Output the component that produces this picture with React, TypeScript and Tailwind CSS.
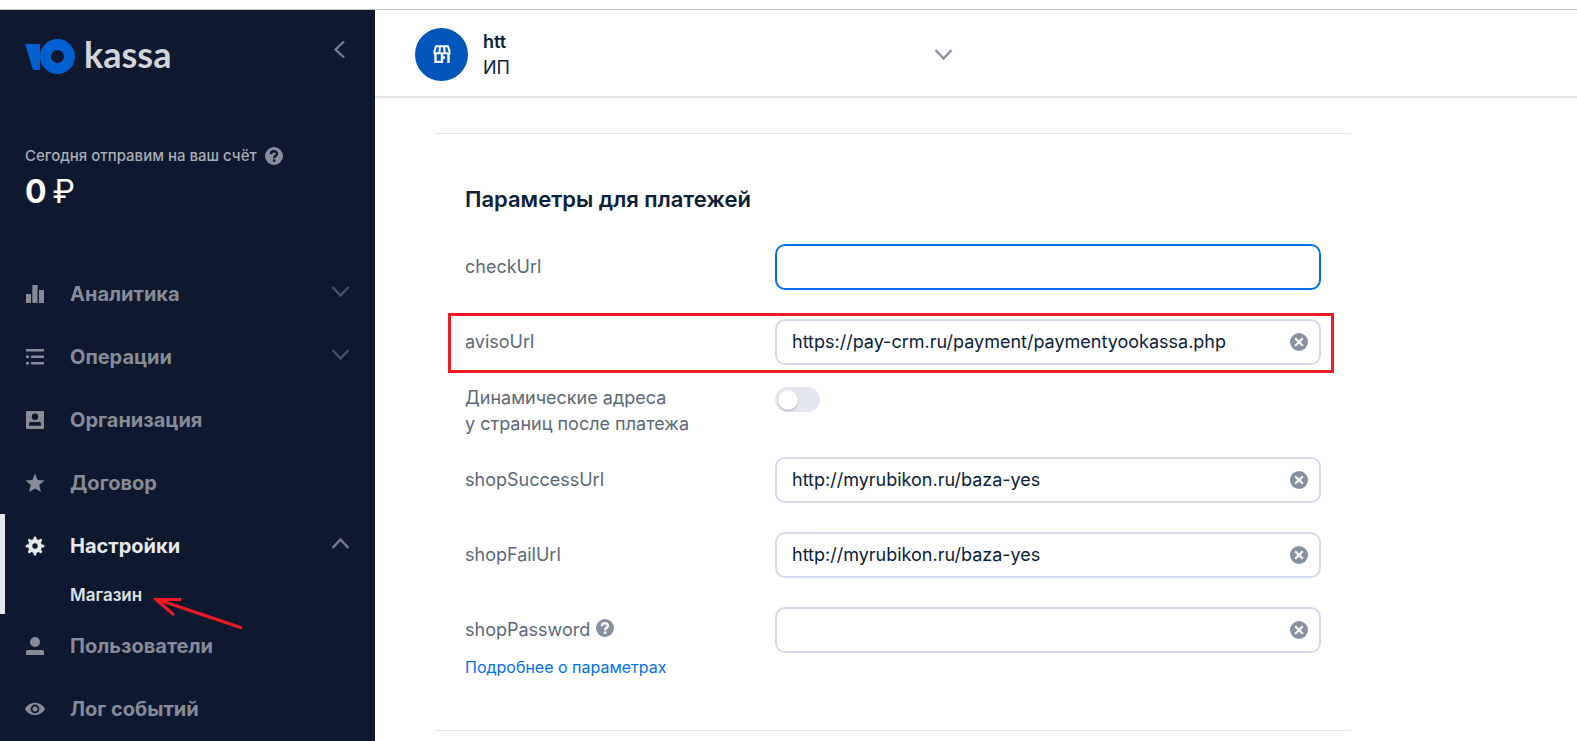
import { useState } from "react";
import type { ReactNode } from "react";
import clsx from "clsx";

interface NavItem {
  label: string;
  icon: ReactNode;
  chevron?: "up" | "down";
  active?: boolean;
  children?: string[];
}

function Chevron({ dir, className }: { dir: "up" | "down" | "left"; className?: string }) {
  const d = {
    up: "M1.5 14 L9.5 5.5 L17.5 14",
    down: "M1.5 5 L9.5 13.5 L17.5 5",
    left: "M14 1.5 L5.5 9.5 L14 17.5",
  }[dir];
  return (
    <svg viewBox="0 0 19 19" className={clsx("h-[19px] w-[19px] shrink-0", className)} fill="none" stroke="currentColor" strokeWidth="2.4">
      <path d={d} />
    </svg>
  );
}

function HelpIcon() {
  return (
    <svg viewBox="0 0 18 18" className="h-[18px] w-[18px]" fill="none">
      <circle cx="9" cy="9" r="9" fill="currentColor" />
      <path d="M5.9 7.2 C5.9 3.2 12 3.4 12 6.8 C12 8.9 9.1 8.8 9.1 11.3" className="stroke-(--hole)" strokeWidth="2.4" />
      <rect x="7.9" y="12.4" width="2.5" height="2.5" className="fill-(--hole)" />
    </svg>
  );
}

function ClearIcon() {
  return (
    <svg viewBox="0 0 18 18" className="h-[18px] w-[18px]" fill="none">
      <circle cx="9" cy="9" r="9" fill="#86919f" />
      <path d="M5.2 5.2 L12.8 12.8 M12.8 5.2 L5.2 12.8" stroke="#fff" strokeWidth="2.2" />
    </svg>
  );
}

function NavIcon({ children }: { children: ReactNode }) {
  return (
    <svg viewBox="0 0 18 18" className="h-[18px] w-[18px] shrink-0 overflow-visible" fill="currentColor">
      {children}
    </svg>
  );
}

const NAV: NavItem[] = [
  {
    label: "Аналитика",
    chevron: "down",
    icon: <path d="M0 9h5v9H0z M6.3 0h5.2v18H6.3z M13 5h5v13h-5z" />,
  },
  {
    label: "Операции",
    chevron: "down",
    icon: <path d="M0 1h18v2.4H0z M0 7.6h3v2.4H0z M5 7.6h13v2.4H5z M0 14h3v2.4H0z M5 14h13v2.4H5z" />,
  },
  {
    label: "Организация",
    icon: (
      <path
        fillRule="evenodd"
        d="M1 0h16a1 1 0 0 1 1 1v16a1 1 0 0 1-1 1H1a1 1 0 0 1-1-1V1a1 1 0 0 1 1-1z M9 2.6a3.2 3.2 0 1 0 0 6.4a3.2 3.2 0 1 0 0-6.4z M3 12.3v2.5h12v-2.5l-1-1.3H4z"
      />
    ),
  },
  {
    label: "Договор",
    icon: <path d="M9 -.5 L11.6 6 L18.6 6.5 L13.2 11.1 L15 18 L9 14.4 L3 18 L4.8 11.1 L-.6 6.5 L6.4 6z" />,
  },
  {
    label: "Настройки",
    chevron: "up",
    active: true,
    children: ["Магазин"],
    icon: (
      <>
        <circle cx="9" cy="9" r="4.8" fill="none" stroke="currentColor" strokeWidth="4.2" />
        {/* eight teeth, 45 degrees apart */}
        <path
          d="M9 3V1 M9 15v2 M3 9H1 M15 9h2 M4.8 4.8L3.4 3.4 M13.2 4.8l1.4-1.4 M4.8 13.2l-1.4 1.4 M13.2 13.2l1.4 1.4"
          fill="none"
          stroke="currentColor"
          strokeWidth="3"
          strokeLinecap="round"
        />
      </>
    ),
  },
  {
    label: "Пользователи",
    icon: (
      <>
        <circle cx="9" cy="5" r="5" />
        <path d="M0 18v-3.4Q0 13 1.8 13h14.4Q18 13 18 14.6V18z" />
      </>
    ),
  },
  {
    label: "Лог событий",
    icon: (
      <>
        <path
          fillRule="evenodd"
          d="M-1 9C1.2 5 5 2.8 9 2.8S16.8 5 19 9C16.8 13 13 15.2 9 15.2S1.2 13-1 9z M9 4.6a4.4 4.4 0 1 0 0 8.8a4.4 4.4 0 1 0 0-8.8z"
        />
        <circle cx="9" cy="9" r="2.5" />
      </>
    ),
  },
];

function Sidebar() {
  return (
    <aside className="w-[375px] shrink-0 bg-[#0e182f] text-[#878b96]">
      <div className="flex h-[86px] items-start justify-between px-[25px] pt-[29px]">
        <a href="#" className="flex items-start gap-[9px]">
          <svg viewBox="0 0 50 35" className="h-[35px] w-[50px]">
            <path d="M0 5h15v26H8z" fill="#0060cf" />
            <path
              fillRule="evenodd"
              fill="#0060cf"
              d="M32.5 0a17.5 17.5 0 1 0 0 35a17.5 17.5 0 1 0 0-35z M32.5 11a6.5 6.5 0 1 1 0 13a6.5 6.5 0 1 1 0-13z"
            />
          </svg>
          <span className="font-[Lato,sans-serif] text-[36px] leading-[30px] font-bold text-[#d3d3da]">kassa</span>
        </a>
        <button type="button" aria-label="Свернуть меню" className="pt-px pr-px">
          <Chevron dir="left" className="text-[#777c87]" />
        </button>
      </div>

      <div className="mt-12 h-[118px] px-[25px]">
        <div className="flex items-center gap-2 text-[15px] leading-6 font-medium text-[#a9adb5]">
          Сегодня отправим на ваш счёт
          <button type="button" aria-label="Подсказка" className="text-[#8b8e9a] [--hole:#0e182f]">
            <HelpIcon />
          </button>
        </div>
        <p className="mt-1 flex gap-1.5 text-[32px] leading-10 text-white">
          <b>0</b>
          <span>₽</span>
        </p>
      </div>

      <nav>
        <ul>
          {NAV.map((item) => (
            <li key={item.label} className={clsx(item.active && "border-l-[5px] border-[#e7e8eb] text-[#e7e8eb]")}>
              <a
                href="#"
                className={clsx("flex h-[63px] items-center pr-[25px] text-xl font-bold", item.active ? "pl-[21px]" : "pl-[26px]")}
              >
                <NavIcon>{item.icon}</NavIcon>
                <span className="ml-[26px] flex-1">{item.label}</span>
                {item.chevron && (
                  <Chevron dir={item.chevron} className={clsx("mb-1", item.active ? "text-[#777c87]" : "text-[#4a5262]")} />
                )}
              </a>
              {item.children?.map((child) => (
                <a key={child} href="#" className="relative flex h-[37px] items-center pl-[65px] text-[17px] font-semibold text-[#dfe0e4]">
                  {child}
                  {/* red arrow pointing at the menu entry */}
                  <svg viewBox="0 0 90 35" className="absolute top-5 left-[149px] h-[35px] w-[90px]" fill="none" stroke="#ed1c24" strokeWidth="3">
                    <path d="M2 2 L88 31 M27 2.5 H2 L20 18" />
                  </svg>
                </a>
              ))}
            </li>
          ))}
        </ul>
      </nav>
    </aside>
  );
}

interface UrlFieldProps {
  name: string;
  initial?: string;
  type?: string;
  focused?: boolean;
  marked?: boolean;
  help?: boolean;
}

function UrlField({ name, initial = "", type = "text", focused, marked, help }: UrlFieldProps) {
  const [value, setValue] = useState(initial);

  return (
    <div className="relative flex items-center">
      <div className="flex w-[310px] shrink-0 items-center gap-1.5">
        <label htmlFor={name}>{name}</label>
        {help && (
          <button type="button" aria-label="Подсказка" className="mb-1 text-[#86919f] [--hole:#fff]">
            <HelpIcon />
          </button>
        )}
      </div>
      <div className="relative flex-1">
        <input
          id={name}
          type={type}
          value={value}
          onChange={(e) => setValue(e.target.value)}
          className={clsx(
            "block h-[46px] w-full rounded-[10px] border-2 bg-white pr-12 pb-0.5 pl-[15px] text-[#0b2138] outline-none",
            focused ? "border-[#0070f0]" : "border-[#d3dae9]"
          )}
        />
        {!focused && (
          <button
            type="button"
            aria-label={`Очистить ${name}`}
            onClick={() => setValue("")}
            className="absolute inset-y-0 right-[13px]"
          >
            <ClearIcon />
          </button>
        )}
      </div>
      {marked && (
        <div className="pointer-events-none absolute -top-1.5 -right-[13px] -bottom-2 -left-[17px] border-[3px] border-[#ed1c24]" />
      )}
    </div>
  );
}

function ShopHeader() {
  return (
    <header className="border-b-2 border-[#e3e7ec] pl-10">
      <button type="button" className="flex h-[86px] w-full max-w-[538px] items-center gap-[15px] pt-0.5 text-left">
        <span className="flex h-[53px] w-[53px] items-center justify-center rounded-full bg-[#0055bb]">
          <svg viewBox="0 0 18 18" className="h-[18px] w-[18px]" fill="none" stroke="#fff" strokeWidth="2">
            <path d="M2.5 1.2h13 M3 1L1.2 7.5 M15 1l1.8 6.5 M7 1L6.3 7.5 M11 1l.7 6.5 M.5 8.2h17" />
            <path d="M2.5 8v9h6.5V8 M15.5 8v10 M9 12.5h3" strokeWidth="2.4" />
          </svg>
        </span>
        <span className="flex-1 pt-0.5 text-lg leading-[26px] text-[#0b2138]">
          <span className="block font-semibold">htt</span>
          <span className="block">ИП</span>
        </span>
        <Chevron dir="down" className="text-[#86919f]" />
      </button>
    </header>
  );
}

export default function App() {
  const [dynamic, setDynamic] = useState(false);

  return (
    <div className="flex min-h-screen flex-col bg-white font-[Inter,sans-serif]">
      <div className="h-2.5 shrink-0 border-b border-[#c8c8c8]" />
      <div className="flex flex-1">
        <Sidebar />
        <main className="min-w-0 flex-1">
          <ShopHeader />
          <section className="mt-[35px] mr-10 ml-[60px] max-w-[916px] border-y border-[#e6e6e6] px-[30px] pt-[49px] pb-[50px]">
            <h2 className="text-[22px] leading-8 font-semibold text-[#0b2138]">Параметры для платежей</h2>
            <form className="mt-[29px] text-lg leading-[26px] text-[#5c6975]">
              <div className="flex flex-col gap-[29px]">
                <UrlField name="checkUrl" focused />
                <UrlField name="avisoUrl" initial="https://pay-crm.ru/payment/paymentyookassa.php" marked />
              </div>
              <div className="my-5 flex items-start">
                <label htmlFor="dynamic" className="w-[310px] shrink-0">
                  Динамические адреса
                  <br />у страниц после платежа
                </label>
                <input
                  id="dynamic"
                  type="checkbox"
                  role="switch"
                  checked={dynamic}
                  onChange={(e) => setDynamic(e.target.checked)}
                  className="mt-0.5 h-[25px] w-[45px] appearance-none rounded-full bg-[#e3e7f0] p-[3px] before:block before:h-[20px] before:w-[20px] before:rounded-full before:bg-white before:shadow-[0_1px_2px_#0004] checked:bg-[#0070f0] checked:before:translate-x-[19px]"
                />
              </div>
              <div className="flex flex-col gap-[29px]">
                <UrlField name="shopSuccessUrl" initial="http://myrubikon.ru/baza-yes" />
                <UrlField name="shopFailUrl" initial="http://myrubikon.ru/baza-yes" />
                <UrlField name="shopPassword" type="password" help />
              </div>
              <a href="#" className="mt-0.5 inline-block text-base leading-6 text-[#0070f0]">
                Подробнее о параметрах
              </a>
            </form>
          </section>
        </main>
      </div>
    </div>
  );
}
